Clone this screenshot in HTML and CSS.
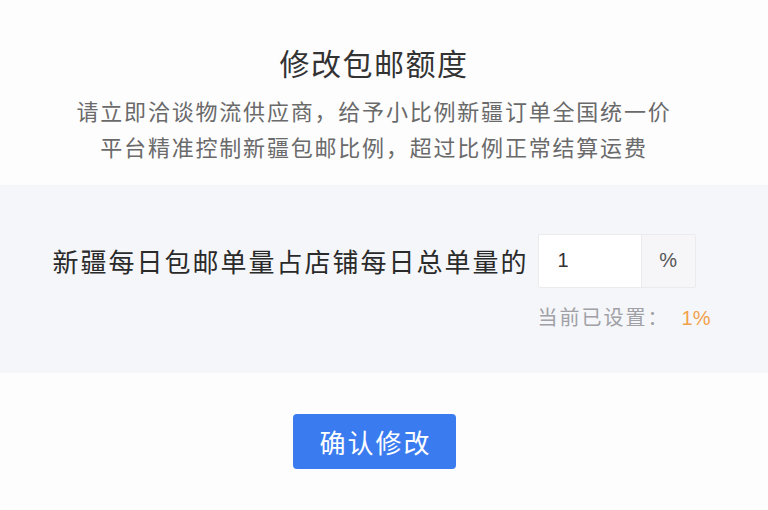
FILE: index.html
```html
<!DOCTYPE html>
<html lang="zh-CN">
<head>
<meta charset="utf-8">
<title>修改包邮额度</title>
<link rel="stylesheet" href="styles.css">
</head>
<body>
<div class="page">
  <header class="head">
    <h1 class="title">修改包邮额度</h1>
    <p class="desc">请立即洽谈物流供应商，给予小比例新疆订单全国统一价<br>平台精准控制新疆包邮比例，超过比例正常结算运费</p>
  </header>
  <section class="band">
    <div class="form">
      <div class="label">新疆每日包邮单量占店铺每日总单量的</div>
      <div class="group">
        <div class="input">1</div>
        <div class="addon">%</div>
      </div>
      <div class="hint">当前已设置：<span class="cur">1%</span></div>
    </div>
  </section>
  <div class="actions">
    <button class="btn" type="button">确认修改</button>
  </div>
</div>
</body>
</html>
```

FILE: styles.css
```css
* { box-sizing: border-box; }
html, body { margin: 0; padding: 0; }
body {
  width: 768px;
  height: 510px;
  overflow: hidden;
  background: #fdfdfe;
  font-family: "Noto Sans CJK SC", "Noto Sans", sans-serif;
  color: #333;
}
.page { display: flex; flex-direction: column; }
.head {
  padding: 42px 20px 21px 0;
  text-align: center;
}
.title {
  margin: 0;
  font-size: 30px;
  line-height: 40px;
  font-weight: 400;
  letter-spacing: 1.5px;
  color: #333;
}
.desc {
  margin: 10px 0 0;
  font-size: 22px;
  line-height: 36px;
  letter-spacing: 1.8px;
  color: #6a6a6a;
}
.band {
  background: #f5f6f9;
  padding: 49px 0 41px;
  display: flex;
  justify-content: center;
}
.form {
  display: grid;
  grid-template-columns: auto auto;
  column-gap: 9px;
  margin-left: -5px;
}
.label {
  font-size: 26px;
  line-height: 54px;
  letter-spacing: 2px;
  color: #2a2a2a;
}
.group {
  display: flex;
  width: 158px;
  height: 54px;
  border: 1px solid #ebebee;
  border-radius: 2px;
  background: #fff;
}
.input {
  width: 102px;
  padding-left: 19px;
  font-family: "Liberation Sans", "Noto Sans", sans-serif;
  font-size: 20px;
  line-height: 50px;
  color: #333;
}
.addon {
  flex: 1;
  border-left: 1px solid #ebebee;
  background: #f6f6f8;
  text-align: center;
  font-family: "Liberation Sans", "Noto Sans", sans-serif;
  font-size: 20px;
  line-height: 50px;
  color: #555;
}
.hint {
  grid-column: 2;
  margin-top: 15px;
  font-size: 20px;
  line-height: 28px;
  letter-spacing: 2px;
  color: #a0a0a6;
  white-space: nowrap;
}
.cur {
  margin-left: 12px;
  color: #f2a14a;
  font-family: "Liberation Sans", "Noto Sans", sans-serif;
  letter-spacing: 0;
}
.actions {
  display: flex;
  justify-content: center;
  padding: 41px 19px 0 0;
  background: #fdfdfe;
}
.btn {
  width: 163px;
  height: 55px;
  border: none;
  border-radius: 4px;
  background: #3a7cf0;
  color: #fff;
  font-family: "Noto Sans CJK SC", "Noto Sans", sans-serif;
  font-size: 26px;
  letter-spacing: 2px;
  padding: 0 0 0 2px;
}
```
